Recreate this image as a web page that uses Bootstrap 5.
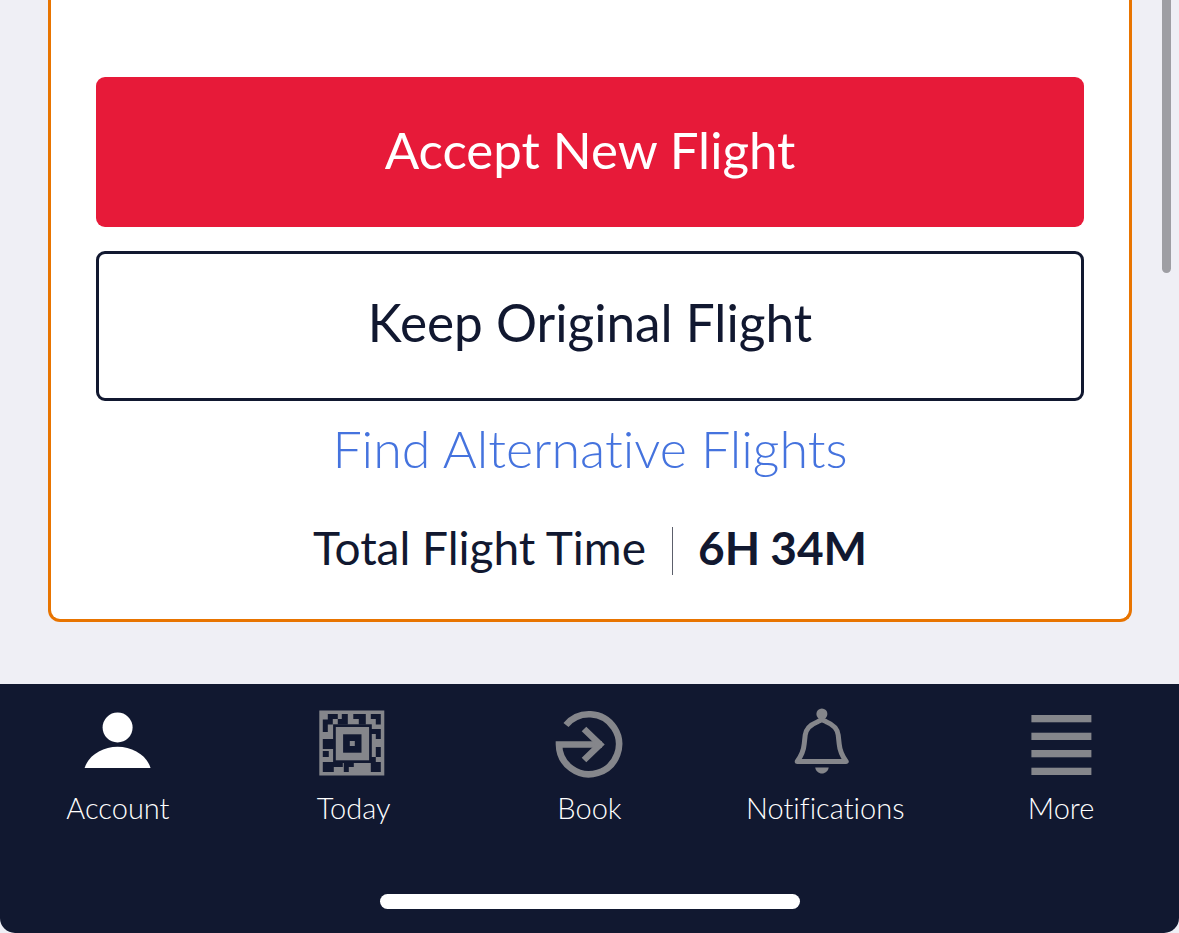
<!DOCTYPE html>
<html lang="en">
  <head>
    <meta charset="UTF-8" />
    <meta name="viewport" content="width=device-width, initial-scale=1.0" />
    <title>Flight Change</title>
    <link rel="stylesheet" href="https://cdn.jsdelivr.net/npm/bootstrap@5.3.0/dist/css/bootstrap.min.css" />
    <style>
      html, body { height: 100%; }
      body { background: #fff; font-family: Lato, "Open Sans", sans-serif; color: #111830; overflow: hidden; font-variant-ligatures: none; }
      .screen { height: 933px; background: #efeff5; position: relative; }
      .flight-area { height: 684px; padding: 0 47px 0 48px; }
      .flight-card { height: 622px; border: 3px solid #e87400; border-top: 0; border-radius: 0 0 12px 12px; background: #fff; padding: 77px 45px 0; }
      .act-btn { height: 150px; width: 100%; border-radius: 9px; font-size: 51px; line-height: 1; padding: 0 0 6px; }
      .act-red { background: #e71a39; border: 0; color: #fff; }
      .act-red:hover { background: #e71a39; color: #fff; }
      .act-line { background: #fff; border: 3px solid #111830; color: #111830; margin-top: 24px; font-size: 51.3px; }
      .alt-link { display: block; text-align: center; font-size: 52px; line-height: 60px; color: #4573de; text-decoration: none; margin-top: 17px; font-weight: 300; }
      .time-row { margin-top: 49px; font-size: 46px; line-height: 42px; }
      .time-rule { width: 1px; height: 48px; background: #5c5f6b; margin: 0 25px 0 26px; }
      .time-val { font-weight: 700; word-spacing: -1px; }
      .tab-bar { height: 249px; background: #111830; border-radius: 0 0 15px 15px; color: #fff; position: relative; }
      .tab-item { width: 20%; padding-top: 16px; font-size: 29px; line-height: 34px; font-weight: 300; text-align: center; }
      .tab-icon { height: 85px; margin-bottom: 6px; }
      .tab-icon svg { display: block; margin: 0 auto; }
      .home-bar { position: absolute; left: 380px; bottom: 24px; width: 420px; height: 15px; border-radius: 8px; background: #fff; }
      .scroll-thumb { position: absolute; left: 1162px; top: 0; width: 9px; height: 273px; border-radius: 0 0 5px 5px; background: #9e9ea3; }
    </style>
  </head>
  <body>
    <div class="screen">
      <div class="flight-area">
        <div class="flight-card">
          <button class="btn act-btn act-red" type="button">Accept New Flight</button>
          <button class="btn act-btn act-line" type="button">Keep Original Flight</button>
          <a class="alt-link" href="#">Find Alternative Flights</a>
          <div class="time-row d-flex justify-content-center align-items-start">
            <span>Total Flight Time</span><span class="time-rule"></span><span class="time-val">6H 34M</span>
          </div>
        </div>
      </div>
      <div class="tab-bar d-flex align-items-start">
        <div class="tab-item">
          <div class="tab-icon">
            <svg width="85" height="85" viewBox="0 0 85 85" fill="#fff"><circle cx="42.6" cy="27.5" r="15"/><path d="M9.6 68C13.6 55 27.6 46.7 42.6 46.7S71.6 55 75.6 68Z"/></svg>
          </div>
          Account
        </div>
        <div class="tab-item">
          <div class="tab-icon">
            <svg width="85" height="85" viewBox="-4.8 -7 85 85">
              <rect x="3.5" y="3.5" width="65" height="65" fill="#85868b"/>
              <g fill="#111830">
                <path d="M12 7h10v5h-5v5.5H12V25H7V12.5h5zM26 7h6v10.5H22V12h4zM37.5 7h12.5v5H37.5zM43 12h7v5.500h-7zM55 7h10v5h-10zM60 12h5v5.500h-5z"/>
                <path d="M7 32h11v10H7zM7 44h6v6H7zM7 55h11v10H7zM18 55h9v5h-9zM28 55h10v5h-5v5h-5z"/>
                <path d="M60 22h5v10h-5zM55 22h5v5h-5zM60 40h5v10h-5zM55 55h10v10h-10zM55 50h5v5h-5z"/>
              </g>
              <rect x="17.300" y="17.300" width="38.700" height="38.700" fill="#111830"/>
              <rect x="20" y="20" width="33.300" height="33.300" fill="#85868b"/>
              <rect x="27.300" y="27.300" width="18.400" height="18.400" fill="#111830"/>
              <rect x="34" y="34" width="5" height="5" fill="#85868b"/>
            </svg>
          </div>
          Today
        </div>
        <div class="tab-item">
          <div class="tab-icon">
            <svg width="85" height="85" viewBox="2 0 85 85" fill="none" stroke="#85868b" stroke-width="6.6"><path d="M21 25A30 30 0 1 1 14 44.5H57"/><path d="M39 29L55 44.5L39 60"/></svg>
          </div>
          Book
        </div>
        <div class="tab-item">
          <div class="tab-icon">
            <svg width="85" height="85" viewBox="2.800 0 85 85" fill="none"><circle cx="41.700" cy="14" r="5.500" fill="#85868b"/><path d="M17 61.500C21 56 23.500 50 24 44L25 35C26 27 32 24 37 22C39 21 40 20 41.700 20C43.400 20 44.500 21 46.500 22C51.500 24 57 27 58 35L59 44C59.500 50 62 56 66 61.500Z" stroke="#85868b" stroke-width="5" stroke-linejoin="round"/><path d="M35 67.500H48.500C48 71 45 73.500 41.700 73.500S35.500 71 35 67.500Z" fill="#85868b"/></svg>
          </div>
          Notifications
        </div>
        <div class="tab-item">
          <div class="tab-icon">
            <svg width="85" height="85" viewBox="0 0 85 85" fill="#85868b"><rect x="12.400" y="15" width="60" height="7.300"/><rect x="12.400" y="32.700" width="60" height="7.300"/><rect x="12.400" y="50" width="60" height="7.300"/><rect x="12.400" y="67.700" width="60" height="7.300"/></svg>
          </div>
          More
        </div>
        <div class="home-bar"></div>
      </div>
      <div class="scroll-thumb"></div>
    </div>
    <script src="https://cdn.jsdelivr.net/npm/bootstrap@5.3.0/dist/js/bootstrap.bundle.min.js"></script>
  </body>
</html>
